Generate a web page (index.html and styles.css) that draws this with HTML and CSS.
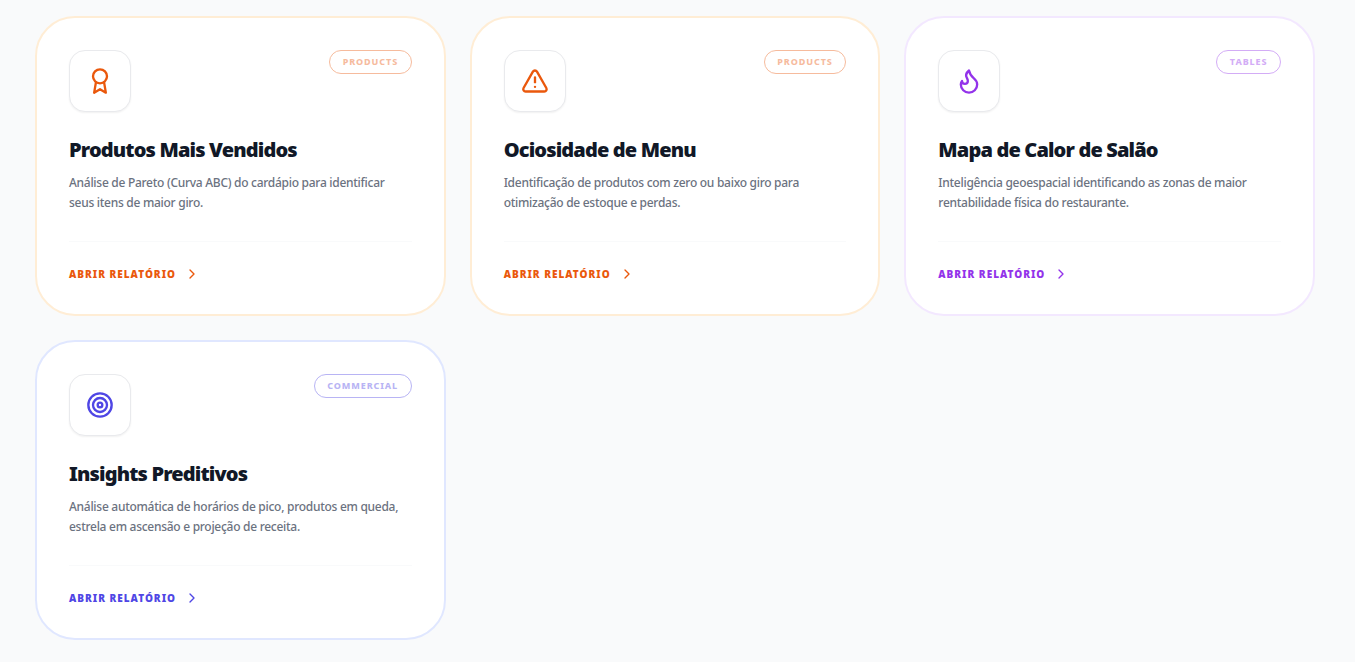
FILE: index.html
```html
<!DOCTYPE html>
<html lang="pt-BR">
<head>
    <meta charset="UTF-8">
    <meta name="viewport" content="width=device-width, initial-scale=1.0">
    <title>Relatórios</title>
    <link rel="stylesheet" href="styles.css">
</head>
<body>

<div class="reports">
    <div class="card card-orange">
        <div class="card-top">
            <div class="icon-box">
                <svg class="icon" viewBox="0 0 24 24"><circle cx="12" cy="8" r="6"/><path d="M15.500 13.200 17 22l-5-3-5 3 1.500-8.800"/></svg>
            </div>
            <span class="tag">Products</span>
        </div>
        <h2>Produtos Mais Vendidos</h2>
        <p>Análise de Pareto (Curva ABC) do cardápio para identificar seus itens de maior giro.</p>
        <a class="open-link" href="#">Abrir Relatório
            <svg class="chevron" viewBox="0 0 24 24"><path d="m9 18 6-6-6-6"/></svg>
        </a>
    </div>

    <div class="card card-orange">
        <div class="card-top">
            <div class="icon-box">
                <svg class="icon" viewBox="0 0 24 24"><path d="M21.700 18 13.700 4a2 2 0 0 0-3.500 0l-8 14A2 2 0 0 0 4 21h16a2 2 0 0 0 1.700-3Z"/><path d="M12 9v4"/><path d="M12 17h.01"/></svg>
            </div>
            <span class="tag">Products</span>
        </div>
        <h2>Ociosidade de Menu</h2>
        <p>Identificação de produtos com zero ou baixo giro para otimização de estoque e perdas.</p>
        <a class="open-link" href="#">Abrir Relatório
            <svg class="chevron" viewBox="0 0 24 24"><path d="m9 18 6-6-6-6"/></svg>
        </a>
    </div>

    <div class="card card-purple">
        <div class="card-top">
            <div class="icon-box">
                <svg class="icon" viewBox="0 0 24 24"><path d="M8.500 14.500A2.500 2.500 0 0 0 11 12c0-1.400-.5-2-1-3-1.100-2.100-.2-4.100 2-6 .5 2.500 2 4.900 4 6.500 2 1.600 3 3.500 3 5.500a7 7 0 1 1-14 0c0-1.200.400-2.300 1-3a2.500 2.500 0 0 0 2.500 2.500Z"/></svg>
            </div>
            <span class="tag">Tables</span>
        </div>
        <h2>Mapa de Calor de Salão</h2>
        <p>Inteligência geoespacial identificando as zonas de maior rentabilidade física do restaurante.</p>
        <a class="open-link" href="#">Abrir Relatório
            <svg class="chevron" viewBox="0 0 24 24"><path d="m9 18 6-6-6-6"/></svg>
        </a>
    </div>

    <div class="card card-indigo">
        <div class="card-top">
            <div class="icon-box">
                <svg class="icon" viewBox="0 0 24 24"><circle cx="12" cy="12" r="10"/><circle cx="12" cy="12" r="6"/><circle cx="12" cy="12" r="2"/></svg>
            </div>
            <span class="tag">Commercial</span>
        </div>
        <h2>Insights Preditivos</h2>
        <p>Análise automática de horários de pico, produtos em queda, estrela em ascensão e projeção de receita.</p>
        <a class="open-link" href="#">Abrir Relatório
            <svg class="chevron" viewBox="0 0 24 24"><path d="m9 18 6-6-6-6"/></svg>
        </a>
    </div>
</div>

</body>
</html>
```

FILE: styles.css
```css
* {
    margin: 0;
    padding: 0;
    box-sizing: border-box;
    font-family: "Noto Sans", "Open Sans", sans-serif;
}

body {
    background-color: #f9fafb;
    padding: 16px 40px 22px 35px;
}

.reports {
    display: grid;
    grid-template-columns: repeat(3, 1fr);
    gap: 24px;
}

.card {
    height: 300px;
    padding: 32px;
    background-color: white;
    border: 2px solid #ffedd5;
    border-radius: 40px;
    display: flex;
    flex-direction: column;
}

.card-orange {
    border-color: #ffedd5;
    color: #ea580c;
}

.card-purple {
    border-color: #f3e8ff;
    color: #9333ea;
}

.card-indigo {
    border-color: #e0e7ff;
    color: #4f46e5;
}

.card-top {
    display: flex;
    justify-content: space-between;
    align-items: flex-start;
    margin-bottom: 24px;
}

.icon-box {
    width: 62px;
    height: 62px;
    background-color: white;
    border: 1px solid #e9eaed;
    border-radius: 16px;
    box-shadow: 0 1px 2px rgba(0, 0, 0, 0.06);
    display: flex;
    align-items: center;
    justify-content: center;
}

.icon {
    width: 28px;
    height: 28px;
    fill: none;
    stroke: currentColor;
    stroke-width: 2;
    stroke-linecap: round;
    stroke-linejoin: round;
}

.tag {
    height: 24px;
    padding: 0 12.5px;
    border: 1px solid currentColor;
    border-radius: 12px;
    font-size: 9px;
    font-weight: 800;
    line-height: 21px;
    letter-spacing: 0.9px;
    text-transform: uppercase;
    opacity: 0.4;
}

.card h2 {
    font-size: 20px;
    font-weight: 900;
    line-height: 28px;
    letter-spacing: -0.85px;
    color: #111827;
    margin-bottom: 9px;
}

.card p {
    font-size: 12px;
    font-weight: 500;
    line-height: 20px;
    letter-spacing: -0.28px;
    color: #6b7280;
    height: 59px;
}

.open-link {
    margin-top: auto;
    padding-top: 24px;
    border-top: 1px solid #f9fafb;
    display: flex;
    align-items: center;
    gap: 8px;
    font-size: 10px;
    font-weight: 900;
    letter-spacing: 1px;
    line-height: 16px;
    text-transform: uppercase;
    text-decoration: none;
    color: inherit;
}

.chevron {
    width: 16px;
    height: 16px;
    fill: none;
    stroke: currentColor;
    stroke-width: 2;
    stroke-linecap: round;
    stroke-linejoin: round;
}
```
